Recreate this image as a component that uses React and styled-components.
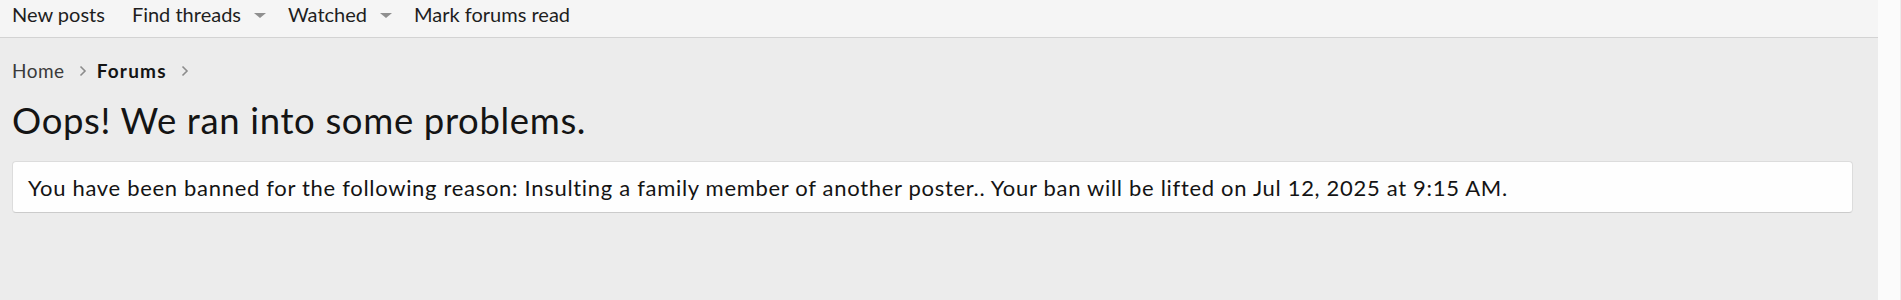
import React from "react";
import styled, { createGlobalStyle } from "styled-components";

const Global = createGlobalStyle`
  html, body { margin: 0; padding: 0; }
  body {
    background: #ececec;
    font-family: Lato, "Segoe UI", "Noto Sans", sans-serif;
    color: #141414;
  }
`;

const Shell = styled.div`
  display: flex;
  height: 300px;
  overflow: hidden;
`;

const Page = styled.div`
  flex: 1;
  display: flex;
  flex-direction: column;
  background: #ececec;
`;

const ScrollTrack = styled.div`
  width: 23px;
  flex: none;
  background: #fbfbfb;
  border-right: 1px solid #ececec;
  box-sizing: border-box;
  box-shadow: inset -4px 0 0 #fbfbfb;
`;

const NavBar = styled.nav`
  height: 38px;
  box-sizing: border-box;
  background: #f5f5f5;
  border-bottom: 1px solid #d3d3d3;
  display: flex;
  align-items: flex-start;
  padding: 0 12px;
  gap: 22px;
`;

const NavItem = styled.a`
  display: flex;
  align-items: center;
  gap: 13px;
  font-size: 20px;
  line-height: 29px;
  color: #1e1e1e;
  text-decoration: none;
  white-space: nowrap;
  margin-right: ${(p) => (p.$extra ? "5px" : "0")};
`;

const Caret = styled.span`
  width: 0;
  height: 0;
  border-left: 6px solid transparent;
  border-right: 6px solid transparent;
  border-top: 5px solid #8f8f8f;
  margin-top: 2px;
`;

const Crumbs = styled.ul`
  list-style: none;
  margin: 0;
  padding: 0 12px;
  margin-top: 21px;
  display: flex;
  align-items: center;
  font-size: 19px;
  line-height: 24px;
`;

const Crumb = styled.li`
  display: flex;
  align-items: center;
  color: ${(p) => (p.$current ? "#141414" : "#3a3a3a")};
  font-weight: ${(p) => (p.$current ? 700 : 400)};
  letter-spacing: ${(p) => (p.$current ? "1.2px" : "0.5px")};
`;

const Chevron = styled.svg`
  width: 8px;
  height: 12px;
  margin: 0 10px 0 14px;
  display: block;
`;

const Title = styled.h1`
  margin: 15px 0 0;
  padding: 0 12px;
  font-size: 36.5px;
  font-weight: 400;
  line-height: 44px;
  letter-spacing: 0.65px;
  color: #141414;
`;

const Notice = styled.div`
  margin: 19px 25px 0 12px;
  height: 52px;
  box-sizing: border-box;
  background: #fefefe;
  border: 1px solid #dcdcdc;
  border-bottom-color: #cbcbcb;
  border-radius: 4px;
  display: flex;
  align-items: center;
  padding: 0 15px;
  font-size: 22px;
  letter-spacing: 0.69px;
  color: #141414;
  white-space: nowrap;
`;

const Chev = () => (
  <Chevron viewBox="0 0 8 12">
    <path d="M1.5 1.5 L6 6 L1.5 10.5" fill="none" stroke="#8c8c8c" strokeWidth="1.6" />
  </Chevron>
);

export default function App() {
  return (
    <Shell>
      <Global />
      <Page>
        <NavBar>
          <NavItem $extra>New posts</NavItem>
          <NavItem>
            <span>Find threads</span>
            <Caret />
          </NavItem>
          <NavItem>
            <span>Watched</span>
            <Caret />
          </NavItem>
          <NavItem>Mark forums read</NavItem>
        </NavBar>
        <Crumbs>
          <Crumb>Home</Crumb>
          <Chev />
          <Crumb $current>Forums</Crumb>
          <Chev />
        </Crumbs>
        <Title>Oops! We ran into some problems.</Title>
        <Notice>
          You have been banned for the following reason: Insulting a family member of another poster.. Your ban will be lifted on Jul 12, 2025 at 9:15 AM.
        </Notice>
      </Page>
      <ScrollTrack />
    </Shell>
  );
}
